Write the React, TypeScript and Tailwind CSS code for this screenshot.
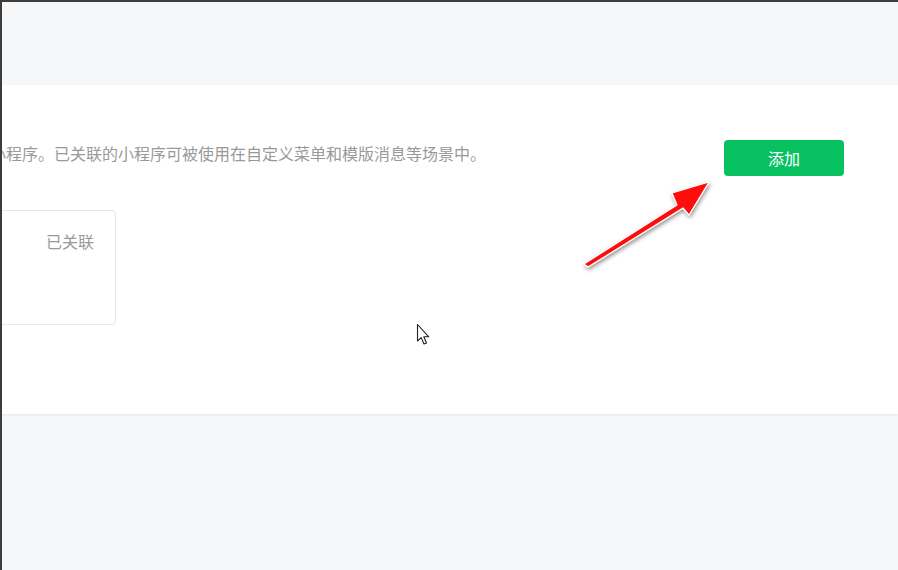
import React from 'react';

const font = { fontFamily: '"Noto Sans CJK SC", "Liberation Sans", sans-serif' };

function RedArrow() {
  return (
    <svg className="absolute left-[568px] top-[167px]" width="160" height="110" viewBox="0 0 160 110">
      <defs>
        <filter id="sh" x="-20%" y="-20%" width="140%" height="140%">
          <feDropShadow dx="1" dy="2" stdDeviation="2" floodColor="#000" floodOpacity="0.45" />
        </filter>
      </defs>
      <polygon
        points="14,95 107,36 102,24 139,13 119,46 113,39 18,98"
        fill="#ff0a0a"
        stroke="#ffffff"
        strokeWidth="1.2"
        strokeLinejoin="round"
        filter="url(#sh)"
      />
    </svg>
  );
}

function Cursor() {
  return (
    <svg className="absolute left-[414px] top-[321px]" width="16" height="24" viewBox="0 0 16 24">
      <path d="M1.5 1.5 L1.5 18 L5.2 14.6 L8 21 L10.5 20 L7.8 13.8 L12.8 13.8 Z" fill="#fff" stroke="#222" strokeWidth="1.1" strokeLinejoin="round" />
    </svg>
  );
}

export default function App() {
  return (
    <div className="relative w-[898px] h-[570px] overflow-hidden bg-[#f6f7f9] border-l-2 border-t-2 border-[#3c3c3c]" style={font}>
      <div className="h-[83px]" />
      <div className="bg-white h-[330px] border-b border-[#ebedf0] shadow-[0_1px_2px_rgba(0,0,0,0.04)] overflow-hidden">
        <div className="flex items-start justify-between pt-[55px] pr-[54px]">
          <p className="ml-[-12px] mt-[2px] text-[16px] leading-[22px] text-[#999999] whitespace-nowrap">
            小程序。已关联的小程序可被使用在自定义菜单和模版消息等场景中。
          </p>
          <button className="w-[120px] h-[36px] rounded-[4px] bg-[#07c160] text-white text-[16px]">添加</button>
        </div>
        <div className="mt-[34px] ml-[-20px] w-[134px] h-[115px] rounded-[4px] border border-[#e7e7eb] flex justify-end pr-[21px] pt-[19px]">
          <span className="text-[16px] leading-[22px] text-[#999999]">已关联</span>
        </div>
      </div>
      <RedArrow />
      <Cursor />
    </div>
  );
}
